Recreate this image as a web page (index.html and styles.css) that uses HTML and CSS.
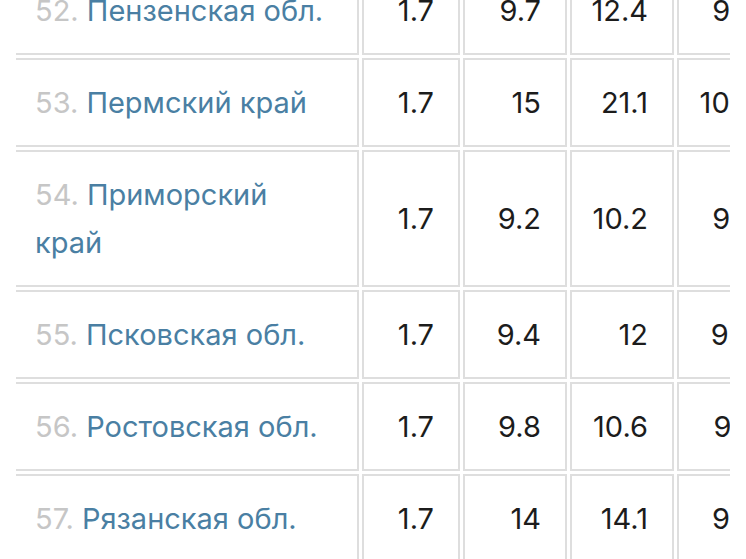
FILE: index.html
```html
<!DOCTYPE html>
<html lang="ru">
<head>
<meta charset="utf-8">
<title>Регионы</title>
<link rel="stylesheet" href="styles.css">
</head>
<body>
<div class="viewport">
  <table class="stats">
    <colgroup>
      <col class="c-name"><col class="c-a"><col class="c-b"><col class="c-b"><col class="c-b">
    </colgroup>
    <tbody>
      <tr><td class="name"><span class="idx">52.</span> <span class="region">Пензенская обл.</span></td><td>1.7</td><td>9.7</td><td>12.4</td><td>9.6</td></tr>
      <tr><td class="name"><span class="idx">53.</span> <span class="region">Пермский край</span></td><td>1.7</td><td>15</td><td>21.1</td><td>10.2</td></tr>
      <tr><td class="name"><span class="idx">54.</span> <span class="region">Приморский край</span></td><td>1.7</td><td>9.2</td><td>10.2</td><td>9.5</td></tr>
      <tr><td class="name"><span class="idx">55.</span> <span class="region">Псковская обл.</span></td><td>1.7</td><td>9.4</td><td>12</td><td>9.4</td></tr>
      <tr><td class="name"><span class="idx">56.</span> <span class="region">Ростовская обл.</span></td><td>1.7</td><td>9.8</td><td>10.6</td><td>9.7</td></tr>
      <tr><td class="name"><span class="idx">57.</span> <span class="region">Рязанская обл.</span></td><td>1.7</td><td>14</td><td>14.1</td><td>9.8</td></tr>
    </tbody>
  </table>
</div>
</body>
</html>
```
FILE: styles.css
```css
html, body {
  margin: 0;
  padding: 0;
  background: #ffffff;
}
body {
  font-family: Inter, "Noto Sans", "Liberation Sans", sans-serif;
  font-size: 29px;
  color: #1c1c1c;
  overflow: hidden;
  height: 559px;
}
.viewport {
  margin-left: 16px;
  width: 714px;
  overflow: hidden;
}
.stats {
  border-collapse: separate;
  border-spacing: 3px;
  margin-left: -6px;
  margin-top: -37px;
  table-layout: fixed;
  width: 774px;
}
.c-name { width: 346px; }
.c-a { width: 98px; }
.c-b { width: 104px; }
.stats td {
  border: 2px solid #dedede;
  padding: 19px 24px 18px 4px;
  line-height: 48px;
  text-align: right;
  vertical-align: middle;
  white-space: nowrap;
}
.stats td.name {
  text-align: left;
  padding-left: 20px;
  padding-right: 30px;
  white-space: normal;
}
.idx {
  color: #c6c6c6;
}
.region {
  color: #4a7fa3;
}
```
